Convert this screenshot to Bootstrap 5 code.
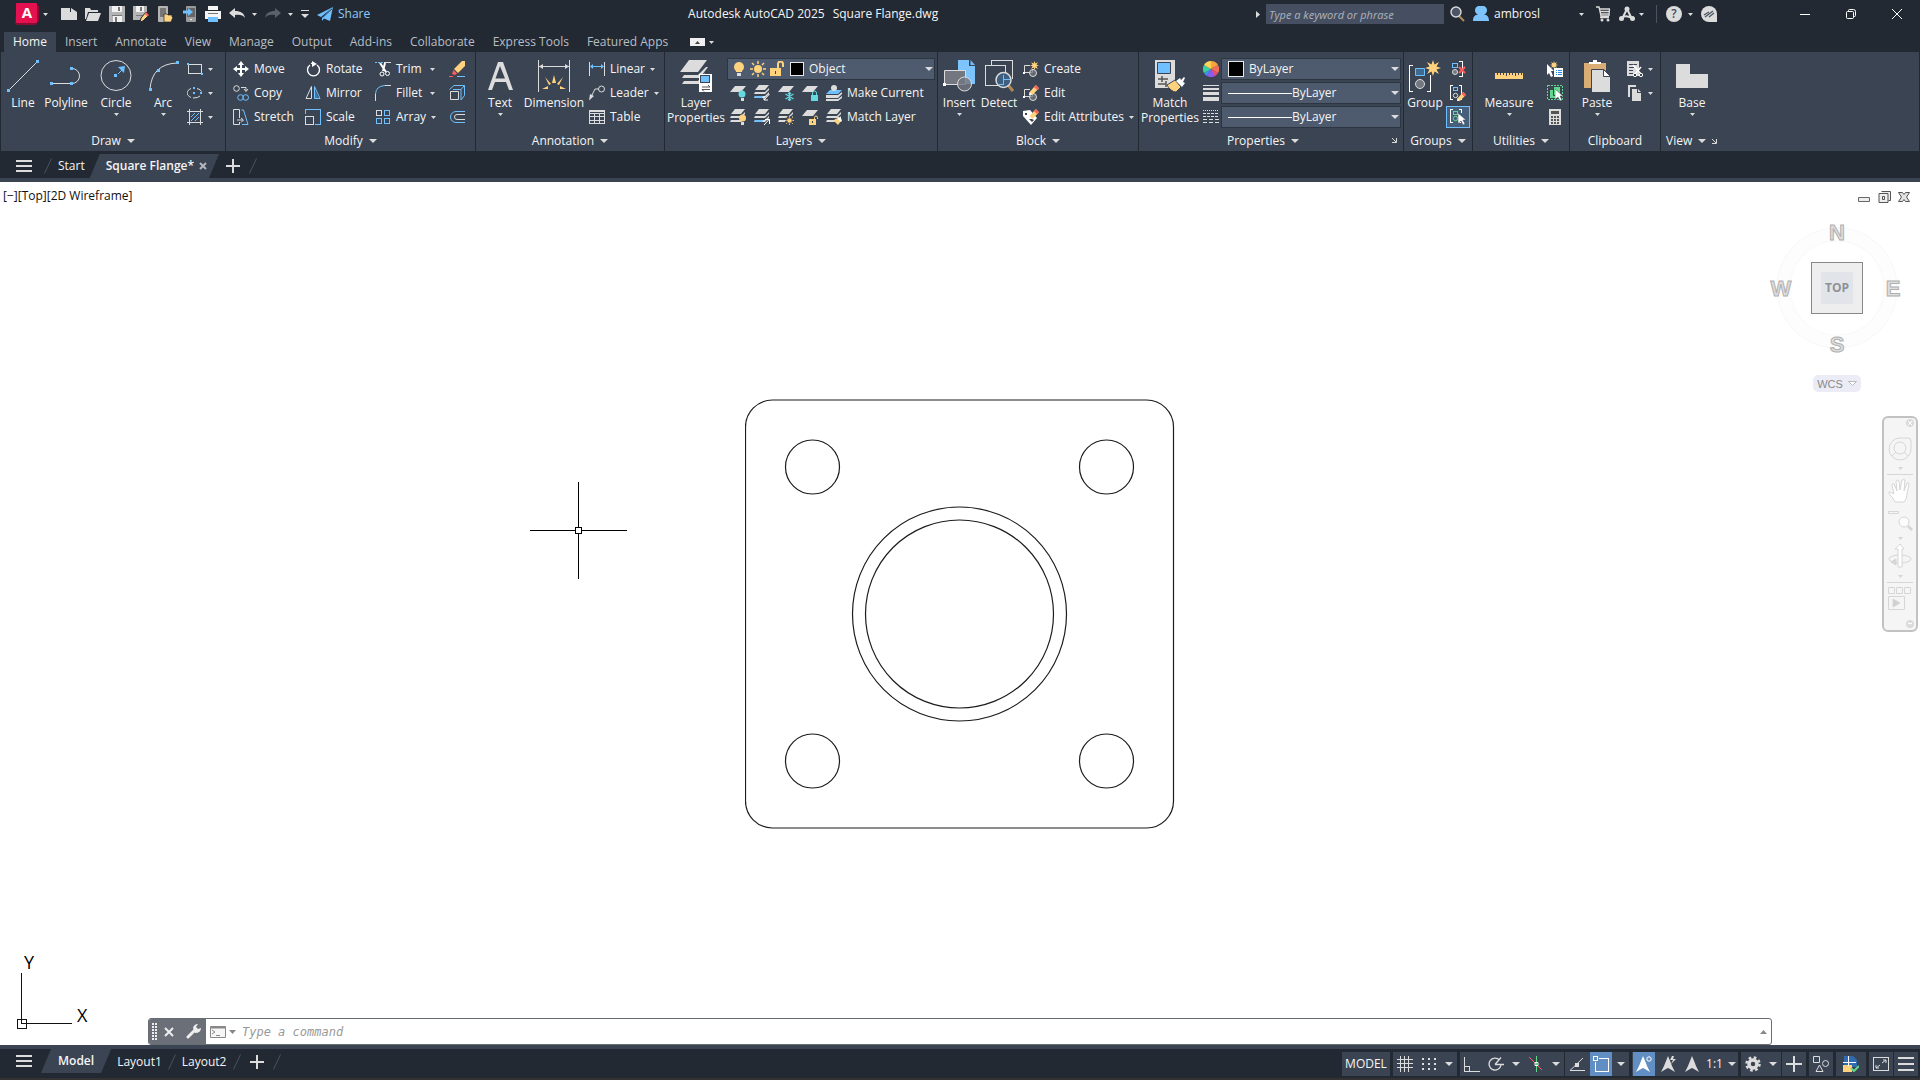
<!DOCTYPE html>
<html lang="en" data-bs-theme="dark">
<head>
<meta charset="utf-8">
<meta name="viewport" content="width=device-width, initial-scale=1">
<title>Autodesk AutoCAD 2025 - Square Flange.dwg</title>
<link href="https://cdn.jsdelivr.net/npm/bootstrap@5.3.0/dist/css/bootstrap.min.css" rel="stylesheet">
<style>
:root{--bar:#222933;--panel:#3b4453;--field:#4e5a6e;--ink:#f5f5f5;--grey:#dcdcdc;--blue:#6fc0ff;--gold:#ffd27d;--teal:#66d9e0;--green:#63d68d;--red:#ff5c5c;--on:#618fc4}
body{font-family:"Open Sans","Noto Sans",sans-serif;font-size:12px;line-height:16px;color:var(--ink);background:var(--bar);overflow:hidden}
svg{display:block;flex:none}
.i16{width:16px;height:16px}.i32{width:32px;height:32px}
.c5{width:5px;height:3px;fill:var(--grey)}.c8{width:8px;height:4px;fill:var(--grey)}
.btn{--bs-btn-padding-x:0;--bs-btn-padding-y:0;--bs-btn-border-width:0;--bs-btn-border-radius:0;--bs-btn-font-size:12px;--bs-btn-line-height:16px;--bs-btn-color:var(--ink);--bs-btn-hover-color:#fff;--bs-btn-active-color:#fff;white-space:nowrap;display:flex;align-items:center;cursor:default}
.l2{margin-left:2px}.l3{margin-left:3px}.l5{margin-left:5px}.l6{margin-left:6px}.l7{margin-left:7px}.l9{margin-left:9px}.l12{margin-left:12px}.l13{margin-left:13px}
.g5{gap:5px}.g6{gap:6px}.g7{gap:7px}
/* icon paints */
.kw{fill:none;stroke:var(--grey)}.kb{fill:none;stroke:var(--blue)}.kg{fill:none;stroke:var(--green)}.kr{fill:none;stroke:var(--red)}.kx{fill:none;stroke:#fff}.kd{fill:none;stroke:var(--panel)}
.fw{fill:var(--grey)}.fx{fill:#fff}.fb{fill:var(--blue)}.fy{fill:var(--gold)}.ft{fill:var(--teal)}.fr{fill:var(--red)}.fg{fill:var(--green)}.fd{fill:var(--panel)}.fm{fill:#73777f}
.crisp{shape-rendering:crispEdges}

.titlebar{height:32px;padding-left:15px;padding-bottom:4px}
.share{color:#8fcbf7}
.search{width:178px;height:20px;background:#454f61;border:0;border-radius:0;color:var(--ink);font-size:11px;font-style:italic;padding:0 3px}
.search::placeholder{color:#aeb4bd}
.user{width:85px}
.sep{width:1px;height:18px;background:#4a5463}
.chrome{margin-left:65px}.chrome .btn{width:46px;height:28px;justify-content:center}
.tabs{height:20px;padding-left:4px}
.tabs a{color:#b9bec5;text-decoration:none;padding:0 9px;line-height:20px}
.tabs a.active{background:var(--panel);color:var(--ink)}
.mini{width:15px;height:8px;background:#f0f0f0;margin-left:13px}

.ribbon{background:var(--panel);margin:0 1px;height:99px}
.pane{border-right:1px solid var(--bar);padding-top:5px;flex:none}
.pane:last-child{border:0}
.tools{height:72px}
.foot{height:22px;padding-top:2px;gap:6px;position:relative}
.launch{position:absolute;right:6px;top:9px}
.p-draw{width:225px}.p-modify{width:250px}.p-anno{width:189px}.p-layer{width:273px}.p-block{width:201px}.p-props{width:265px}.p-group{width:69px}.p-util{width:97px}.p-clip{width:91px}
.big{flex-direction:column;height:72px;padding-top:3px;justify-content:flex-start;line-height:15px}
.big .cap{margin:3px 0;text-align:center}
.tool{height:24px;gap:5px}
.stack{display:flex;flex-direction:column}
.w34{width:34px}.w38{width:38px}.w42{width:42px}.w48{width:48px}.w52{width:52px}.w54{width:54px}.w60{width:60px}.w62{width:62px}.w70{width:70px}.w72{width:72px}
.modes{width:60px;margin-right:14px}
.drop{height:22px;margin:1px 0;background:var(--field);border:1px solid #2d3541;padding:0 1px 0 6px}
.drop select{appearance:none;background:transparent;border:0;color:var(--ink);padding:0 5px;font-size:12px;line-height:16px;flex:1;min-width:0;outline:0}
.drop option{color:#fff;background:var(--field)}
.drop.lay{width:208px;padding-left:3px}.drop.prop{width:180px;margin-left:2px}
.swatch{width:14px;height:14px;background:#000;border:1px solid #e8e8e8}
.swatch.wide{width:16px;height:16px}
.rule{width:64px;height:1px;background:#fff}
.lit{background:#46607c;border:1px solid var(--blue);width:24px;height:22px;margin:1px 0;justify-content:center}

.docs{height:27px;padding:3px 0 0 16px}
.docs .slant{height:24px}
.slant{background:var(--panel);clip-path:polygon(10px 0,100% 0,calc(100% - 10px) 100%,0 100%)}
.slant.file{padding:0 12px 0 16px;margin-left:5px;font-weight:600}
.edge{height:4px;background:var(--panel)}

.sheet{background:#fff;color:#111;position:relative;min-height:0}
.vp{position:absolute;left:3px;top:6px}
.vpc{position:absolute;right:10px;top:9px;gap:7px}
.cross{position:absolute;left:530px;top:300px}
.ucs{position:absolute;left:16px;bottom:8px}
.cube{position:absolute;right:16px;top:30px}
.wcs{position:absolute;right:59px;top:193px;background:#ececf6;color:#888;border-radius:5px;height:17px;width:48px;gap:5px;justify-content:center;font:11px/16px "Liberation Sans",sans-serif}
.navbarv{position:absolute;right:2px;top:234px}
.cmd{position:absolute;left:148px;right:148px;bottom:0;height:27px;border:1px solid #686c75;border-radius:3px;background:#fff;overflow:hidden}
.cmd .grip{background:#6b6f78;width:57px;height:100%;padding-left:3px}
.cmd input{border:0;background:none;flex:1;font:italic 12px/16px "DejaVu Sans Mono",monospace;color:#222;padding:0 0 0 6px;outline:0}
.cmd input::placeholder{color:#999;opacity:1}

.status{height:29px;padding-left:16px}
.status .hamb{margin-top:6px}
.status .slant{height:24px;padding:0 17px;margin-left:9px;font-weight:600}
.status .toggles{padding-right:2px}
.grp{background:var(--panel);height:24px;margin-left:3px}
.grp.near{margin-left:1px}
.grp .btn{height:24px;width:24px;justify-content:center}
.grp .btn.car{width:16px}
.grp .btn.w48{width:48px}.grp .btn.w34{width:34px}
.grp .btn.on{background:var(--on);width:22px;margin:0 1px}
.grp.doc{padding:0 3px}
.foot2{height:2px;background:#333}
</style>
</head>
<body class="vh-100 d-flex flex-column">

<svg width="0" height="0" class="position-absolute" aria-hidden="true">
<symbol id="dn5" viewBox="0 0 5 3"><path d="M0 0h5L2.500 3z"/></symbol>
<symbol id="dn8" viewBox="0 0 8 4"><path d="M0 0h8L4 4z"/></symbol>
<symbol id="lau" viewBox="0 0 5 5"><path d="M0 0l4 4M4.500 0v4.500H0" fill="none" stroke="#dcdcdc"/></symbol>
<symbol id="menu" viewBox="0 0 16 12"><path class="fw crisp" d="M0 0h16v2H0zM0 5h16v2H0zM0 10h16v2H0z"/></symbol>
<symbol id="plus" viewBox="0 0 14 14"><path class="fw crisp" d="M6 0h2v6h6v2H8v6H6V8H0V6h6z"/></symbol>
<symbol id="slash" viewBox="0 0 8 16"><path d="M.5 15.500L7.500.5" stroke="#4a5260" fill="none"/></symbol>
<!-- quick access -->
<symbol id="new" viewBox="0 0 16 16"><path class="fw" d="M0 2h9v4h7v8H0z"/><path class="fw" d="M10 2l6 4h-6z"/></symbol>
<symbol id="open" viewBox="0 0 16 16"><path class="fw" d="M0 2h5l1 2h7v2H3L1 13H0z"/><path class="fw" d="M4 7h12l-3 8H1z"/></symbol>
<symbol id="save" viewBox="0 0 16 16"><path d="M0 0h16v16H0z" fill="#b4b4b4"/><path d="M3 0h10v6H3zM4 10h9v6H4z" fill="#f2f2f2"/><path d="M9 1h2v4H9zM3 9h10v1H3zM6 11h2v5H6z" fill="#777"/></symbol>
<symbol id="saveas" viewBox="0 0 16 16"><path d="M0 0h14v9L9 14H0z" fill="#b4b4b4"/><path d="M3 0h8v6H3z" fill="#f2f2f2"/><path d="M7 1h2v4H7zM3 9h8v1H3z" fill="#777"/><path class="fy" d="M13 6l3 3-6 6-3 1 1-4z" stroke="#222933"/><path class="fr" d="M13 6l3 3-1.500 1.500-3-3z"/></symbol>
<symbol id="phone1" viewBox="0 0 16 16"><rect x="1" width="10" height="16" rx="1" fill="#b4b4b4"/><path d="M3 2h6v9H3z" fill="#777"/><path class="fy" d="M7 8h3l1 1h4v2h1l-2 5H7z" stroke="#222933" stroke-width=".7"/></symbol>
<symbol id="phone2" viewBox="0 0 16 16"><rect x="5" width="10" height="16" rx="1" fill="#9a9a9a"/><path d="M6 2h8v9H6z" fill="#666"/><path d="M9 13h2v1H9z" fill="#eee"/><path class="fb" d="M2 4.500h5V2l5 4-5 4V7.500H2z"/></symbol>
<symbol id="print" viewBox="0 0 16 16"><path d="M3 0h10v4H3z" fill="#f5f5f5"/><path d="M0 5h16v8h-3v-2H3v2H0z" fill="#f5f5f5"/><path d="M3 7h10v1H3z" fill="#777"/><path class="fb" d="M3 11h10v5H3z"/></symbol>
<symbol id="undo" viewBox="0 0 16 16"><path d="M0 7l6-5v3c6 0 9 2 10 7-2-3-5-3.500-10-3v3z"/></symbol>
<symbol id="redo" viewBox="0 0 16 16"><path d="M16 7l-6-5v3C4 5 1 7 0 12c2-3 5-3.500 10-3v3z"/></symbol>
<symbol id="share" viewBox="0 0 16 16"><path class="fb" d="M16 1L0 9l4 2zM16 1L5 11.500V15l2-2.500 6 2.500z"/><path d="M15 3L5.500 11.500" stroke="#222933" stroke-width=".8"/></symbol>
<symbol id="find" viewBox="0 0 16 16"><path d="M9 10l5 5" stroke="#b08a55" stroke-width="2"/><circle cx="6" cy="6" r="5" fill="#4b5565" stroke="#dcdcdc" stroke-width="1.400"/></symbol>
<symbol id="user" viewBox="0 0 16 16"><path d="M8 0a4.500 4.500 0 0 1 3 8.500c3 .5 5 2 5 6.500H0c0-4.500 2-6 5-6.500A4.500 4.500 0 0 1 8 0z" fill="#7cc4fb"/></symbol>
<symbol id="cart" viewBox="0 0 16 16"><path class="kw" stroke-width="1.300" d="M0 1h3l2 9h8M4 11.500h9M4 3h10M4.500 5.500h9M5 8h8M13.500 3L13 10"/><circle class="fw" cx="6" cy="14" r="1.500"/><circle class="fw" cx="12" cy="14" r="1.500"/></symbol>
<symbol id="alogo" viewBox="0 0 16 16"><path class="kw" stroke-width="2" d="M8 3l5 10M8 3L3 13M3 12c3-3 6-2 10 0"/><circle class="fw" cx="8" cy="3" r="2.500"/><circle class="fw" cx="2.500" cy="12.500" r="2.500"/><circle class="fw" cx="13.500" cy="12.500" r="2.500"/></symbol>
<symbol id="chat" viewBox="0 0 16 16"><path class="fw" d="M8 0a8 8 0 0 1 8 8v8H8A8 8 0 0 1 8 0z"/><path d="M3 9l5-3M4 11l8-6M8 11l5-4" stroke="#4b5565" stroke-width="1.300"/></symbol>
<!-- draw -->
<symbol id="line" viewBox="0 0 32 32"><path class="kw" d="M2 30L30 2"/><path class="fb" d="M0 29h3v3H0zM29 0h3v3h-3z"/></symbol>
<symbol id="pline" viewBox="0 0 32 32"><path class="kw" d="M2 23.500h20a7.500 7.500 0 0 0 0-15"/><path class="fb" d="M0 22h3v3H0zM20 22h3v3h-3zM20 7h3v3h-3z"/></symbol>
<symbol id="circle" viewBox="0 0 32 32"><circle class="kw" cx="16" cy="15.500" r="15"/><path class="kb" d="M18 14l5-5"/><path class="fb" d="M14 14h3v3h-3zM25 6l-1 7-6-6z"/></symbol>
<symbol id="arc" viewBox="0 0 32 32"><path class="kw" d="M3 29Q5 4 30 3"/><path class="fb" d="M2 28h3v3H2zM10 9h3v3h-3zM29 1h3v3h-3z"/></symbol>
<symbol id="rect" viewBox="0 0 16 16"><path class="kw crisp" d="M1.500 3.500h13v9h-13z"/><path class="fb" d="M0 2h2v2H0zM14 12h2v2h-2z"/></symbol>
<symbol id="ell" viewBox="0 0 16 16"><path class="kw" d="M4 3.500C-1.500 6-1 10 4 12.500M10 3.500q4 1 4.500 3M13 11q-2 2-7 2"/><path class="fb" d="M6 2h2v2H6zM13 7h2v2h-2zM6 7h2v2H6z"/></symbol>
<symbol id="hatch" viewBox="0 0 16 16"><path class="kw crisp" d="M2.500 0v16M13.500 0v16M0 2.500h16M0 13.500h16"/><path class="kb" d="M4 8l4-4M4 12l8-8M8 12l4-4"/></symbol>
<!-- modify -->
<symbol id="move" viewBox="0 0 16 16"><path class="fx" d="M8 0l3 4H9v3h3V5l4 3-4 3V9H9v3h2l-3 4-3-4h2V9H4v2L0 8l4-3v2h3V4H5z"/></symbol>
<symbol id="copy" viewBox="0 0 16 16"><circle class="kw" cx="3.500" cy="3.500" r="2.800"/><path class="kw" d="M8 2.500h5V6M11 4l2 2.500L15 4"/><circle class="kb" cx="7.500" cy="12.500" r="2.800"/><circle class="kb" cx="12.700" cy="12.500" r="2.800"/></symbol>
<symbol id="stretch" viewBox="0 0 16 16"><path class="kw" d="M6.500 9V.5h-6v15h6V13M4 11h6M8 9l2.500 2L8 13.500"/><path class="kb" d="M8.500 1h2l4.500 14.500H9"/></symbol>
<symbol id="rot" viewBox="0 0 16 16"><path class="kx" stroke-width="1.300" d="M5 4a6 6 0 1 0 7 0M9 3.500q-2-1.500-3-1"/><path class="fx" d="M7 0l5 3-5 3z"/></symbol>
<symbol id="mir" viewBox="0 0 16 16"><path d="M6.500 1.500L1 13.500h5.500z" class="kw"/><path d="M9 3v11h5z" fill="#3f77a8"/><path d="M9.500 1.500v12H15z" class="kb"/></symbol>
<symbol id="scale" viewBox="0 0 16 16"><path class="kb crisp" d="M.5 5V.5h15v15H10"/><path class="kw crisp" d="M.5 7.500h8v8h-8z"/></symbol>
<symbol id="trim" viewBox="0 0 16 16"><path class="kb crisp" stroke-dasharray="2 1" d="M0 1.500h9"/><path class="kw crisp" d="M9 1.500h7"/><path d="M5 2l6 9M10 2L8 10" stroke="#fff" stroke-width="2"/><circle class="kx" cx="7" cy="13" r="2"/><circle class="kx" cx="12.500" cy="12.500" r="2"/></symbol>
<symbol id="fillet" viewBox="0 0 16 16"><path class="kw crisp" d="M.5 16V9M10 .5h6"/><path class="kb" d="M.5 9Q1 1 10 .5"/></symbol>
<symbol id="array" viewBox="0 0 16 16"><path class="kw crisp" d="M1.500 1.500h5v5h-5z"/><path class="kb crisp" d="M9.500 1.500h5v5h-5zM1.500 9.500h5v5h-5zM9.500 9.500h5v5h-5z"/></symbol>
<symbol id="erase" viewBox="0 0 16 16"><path class="fy" d="M13 0h3v5l-7 7-4-4z"/><path class="fr" d="M4.500 9l3.500 3.500L6 14 3 13z"/><path class="kb crisp" d="M8 15.500h8"/><path class="kr crisp" d="M0 15.500h4"/></symbol>
<symbol id="explode" viewBox="0 0 16 16"><path class="kb" d="M.5 4.500L5 .5h10.500v10L12 15M4 4.500h8V15M12 4.500L15.500.5"/><path class="kw" d="M1.500 6.500h8v8h-8z"/></symbol>
<symbol id="offset" viewBox="0 0 16 16"><path class="kb" d="M16 2.500H7a5.500 5.500 0 0 0 0 11h9"/><path class="kw" d="M16 5.500H8a2.500 2.500 0 0 0 0 5h8"/></symbol>
<!-- annotation -->
<symbol id="text" viewBox="0 0 32 32"><path class="fw" fill-rule="evenodd" d="M14 2h5l10 28h-4l-3-8H11l-3 8H4zM16 6l-4.500 12.500h9.500z"/></symbol>
<symbol id="dim" viewBox="0 0 32 32"><path class="kw crisp" d="M.5 0v32M31.500 0v32M1 6.500h30"/><path class="fw" d="M1 6.500L5 4v5zM31 6.500L27 4v5z"/><path class="fy" d="M16 15l2 8h-4zM7 17l6 7-2 1zM25 17l-6 7 2 1zM4 29l6-3v3zM28 29l-6-3v3z"/></symbol>
<symbol id="lin" viewBox="0 0 16 16"><path class="kw crisp" d="M.5 1v14M15.500 1v14"/><path class="kb crisp" d="M2 5.500h12"/><path class="fb" d="M1 5.500L4 3v5zM15 5.500L12 3v5z"/></symbol>
<symbol id="lead" viewBox="0 0 16 16"><circle class="kw" cx="12.500" cy="4" r="3"/><path class="kw" d="M9.500 4H6L2 12"/><path class="fw" d="M0 15.500L1 9l4 2z"/></symbol>
<symbol id="table" viewBox="0 0 16 16"><path class="kw crisp" d="M.5 1.500h15v13H.5zM0 4.500h16M0 7.500h16M0 11.500h16M5.500 5v10M10.500 5v10M0 2.500h16"/></symbol>
<!-- layers -->
<symbol id="layprop" viewBox="0 0 32 32"><path class="fw" d="M9 0h18l-9 12H0zM26 7h2l-3 4-5 7H2l2-3h14zM25 13v5l-5 6H2l2-3h14z"/><path class="fx" d="M19 14h13v18H19z"/><path class="fb crisp" d="M20.500 15.500h9v7h-9z" stroke="#3b4453"/><path d="M22 27h8l-2-2M30 29.500h-8l2 2" stroke="#555" fill="none"/></symbol>
<symbol id="bulb" viewBox="0 0 16 16"><circle class="fy" cx="8" cy="6" r="5"/><path class="fy" d="M5 9h6v2H5z"/><path class="fw" d="M6 12h4v3H6z"/></symbol>
<symbol id="sun" viewBox="0 0 16 16"><circle class="fy" cx="8" cy="8" r="4"/><path d="M8 0v3M8 13v3M0 8h3M13 8h3M2 2l2 2M12 12l2 2M14 2l-2 2M2 14l2-2" stroke="#ffd27d" stroke-width="1.500"/></symbol>
<symbol id="unlock" viewBox="0 0 16 16"><path class="fy" d="M1 7h11v8H1z"/><path d="M9 7V3a2.500 2.500 0 0 1 5 0v3" fill="none" stroke="#ffd27d" stroke-width="2"/><path class="fd" d="M6 10h1v3H6z"/></symbol>
<symbol id="ly1" viewBox="0 0 16 16"><path class="fw" d="M5 1h11l-5 6H0z"/></symbol>
<symbol id="ly3" viewBox="0 0 16 16"><path class="fw" d="M5 0h10l-4 5H1zM1 7h10l4-4v2l-4 4H0zM1 11h10l4-4v2l-4 4H0z"/></symbol>
<symbol id="l-off" viewBox="0 0 16 16"><use href="#ly1"/><circle class="ft" cx="12" cy="9" r="3.500"/><path class="fw" d="M11 13h3v3h-3z"/></symbol>
<symbol id="l-iso" viewBox="0 0 16 16"><use href="#ly3"/><path class="fb" d="M1 11h8l-1 2H0z"/><path class="kx" d="M15.500 9L10 15M10 11.500V15h4"/></symbol>
<symbol id="l-frz" viewBox="0 0 16 16"><use href="#ly1"/><path d="M11.500 7v9M7.500 9l8 5M15.500 9l-8 5M10 8l1.500 1.500L13 8M10 15l1.500-1.500L13 15" fill="none" stroke="#66d9e0" stroke-width="1.200"/></symbol>
<symbol id="l-lock" viewBox="0 0 16 16"><use href="#ly1"/><path class="ft" d="M9 10h7v6H9z"/><path d="M10.500 10V8a2 2 0 0 1 4 0v2" fill="none" stroke="#66d9e0"/></symbol>
<symbol id="l-cur" viewBox="0 0 16 16"><path class="fb" d="M4 5h12l-4 4H0z"/><path class="fw" d="M0 10h12l4-3v2l-4 4H0zM0 14h12l4-3v2l-4 3H0z"/><circle class="fw" cx="8" cy="3" r="3"/></symbol>
<symbol id="l-on" viewBox="0 0 16 16"><use href="#ly3"/><circle class="fy" cx="12.500" cy="9" r="3.500"/><path class="fw" d="M11 13h3v3h-3z"/></symbol>
<symbol id="l-uniso" viewBox="0 0 16 16"><use href="#ly3"/><path class="fb" d="M1 11h8l-1 2H0z"/><path class="kx" d="M10 16l5.500-6M11 10.500h4.500V15"/></symbol>
<symbol id="l-thaw" viewBox="0 0 16 16"><use href="#ly3"/><circle class="fd" cx="11.500" cy="11.500" r="4.500"/><use href="#sun" x="7" y="7" width="9" height="9"/></symbol>
<symbol id="l-unl" viewBox="0 0 16 16"><use href="#ly1"/><path class="fy" d="M7 10h7v6H7z"/><path d="M12.500 10V8.500a1.500 1.500 0 0 1 3 0V10" fill="none" stroke="#ffd27d"/><path class="fd" d="M10 12h1v2h-1z"/></symbol>
<symbol id="l-mat" viewBox="0 0 16 16"><use href="#ly3"/><path class="fy" d="M9 10l4-1 2 3-3 4-4-4z"/><path class="fx" d="M12 8l3 1 1 3-1.500 1L11 9z"/></symbol>
<!-- block -->
<symbol id="insert" viewBox="0 0 32 32"><path d="M15 0h11l6 6v18H15z" fill="#7cc4fb"/><path class="fd" d="M26 0v6h6V0z"/><path class="fb" d="M27.500 0v5H32z"/><path class="fm" stroke="#dcdcdc" d="M1.500 10.500h21v14h-21z"/><path class="fx" d="M0 23h3v3H0z"/><circle class="fm" fill-opacity=".8" stroke="#dcdcdc" cx="21.500" cy="24" r="7"/></symbol>
<symbol id="detect" viewBox="0 0 32 32"><path class="kw crisp" d="M8.500 5V.5h21V19M2.500 5.500h20v20h-20z"/><path d="M25 25l5 6" stroke="#b08a55" stroke-width="3"/><circle cx="20.500" cy="20" r="7.500" fill="#3d5f80" stroke="#dcdcdc" stroke-width="1.500"/><path class="kb crisp" d="M20.500 15v9M16 24.500h5M21 19.500h6"/></symbol>
<symbol id="blk" viewBox="0 0 16 16"><path class="kw" d="M7 4.500H1.500v7h8V8"/><path class="fx" d="M0 11h2v2H0z"/><circle class="fm" fill-opacity=".7" stroke="#dcdcdc" cx="10" cy="12" r="3.500"/></symbol>
<symbol id="star" viewBox="0 0 16 16"><path class="fy" d="M8 0l1.500 4.500L14 2l-2.500 4.500L16 8l-4.500 1.500L14 14l-4.500-2.500L8 16l-1.500-4.500L2 14l2.500-4.500L0 8l4.500-1.500L2 2l4.500 2.500z"/></symbol>
<symbol id="pen" viewBox="0 0 16 16"><path class="fy" d="M11 0l5 5L6 15l-5 1 0-5z"/><path class="fr" d="M11 0l5 5-3 3-5-5z"/><path class="fx" d="M1 11l4 4-5 1z"/></symbol>
<symbol id="b-new" viewBox="0 0 16 16"><use href="#blk"/><use href="#star" x="7" width="9" height="9"/></symbol>
<symbol id="b-edit" viewBox="0 0 16 16"><use href="#blk"/><use href="#pen" x="6" width="10" height="10"/></symbol>
<symbol id="b-attr" viewBox="0 0 16 16"><path class="fx" d="M0 2l7-1 7 8-6 7-8-9z"/><path class="fd" d="M2 4h2v2H2zM6 10l3 3 2-2-2-1z"/><use href="#pen" x="6" width="10" height="10"/></symbol>
<!-- properties -->
<symbol id="mprop" viewBox="0 0 32 32"><path class="fw" d="M1 0h20v28H1z"/><path class="fb" stroke="#3b4453" d="M3.500 2.500h13v11h-13z"/><path d="M4 19h10M8 16v6M4 24h8M12 21v6" stroke="#555" stroke-width="1.500"/><path class="fy" d="M13 25l8-5 6 7-5 5c-3 0-7-3-9-7z" stroke="#3b4453"/><path class="fx" d="M22 21l4-3 1 2 3-3 1 1-2 4 2 1-3 4z"/></symbol>
<symbol id="lwt" viewBox="0 0 16 16"><path class="fw crisp" d="M0 0h16v1H0zM0 3h16v2H0zM0 7h16v3H0zM0 12h16v4H0z"/></symbol>
<symbol id="ltp" viewBox="0 0 16 16"><g class="kw crisp"><path stroke-dasharray="1 1" d="M0 1.500h16"/><path stroke-dasharray="3 1" d="M0 4.500h16M0 7.500h16"/><path stroke-dasharray="4 2" d="M0 10.500h16M0 13.500h16"/></g></symbol>
<!-- groups -->
<symbol id="group" viewBox="0 0 32 32"><path class="kx crisp" d="M4 5.500H.5v26H4M18 31.500h3.500V15"/><path d="M6.500 8.500h9v7h-9z" fill="#3f6a92" stroke="#6fc0ff"/><circle class="fm" stroke="#dcdcdc" cx="11" cy="24" r="4.500"/><use href="#star" x="16" y="0" width="16" height="16"/></symbol>
<symbol id="g-base" viewBox="0 0 16 16"><path class="kx crisp" d="M3 .5H.5v14H3M9 .5h2.500v14H9"/><path class="kb crisp" d="M3.500 2.500h4v3h-4z"/><circle class="kw" cx="5.500" cy="10.500" r="2.200"/></symbol>
<symbol id="g-un" viewBox="0 0 16 16"><path class="kx crisp" d="M9 .5h3.500v15H9"/><path class="kb crisp" d="M2.500 2.500h5v4h-5z"/><circle class="fm" stroke="#dcdcdc" cx="5" cy="11" r="2.500"/><path class="kr" stroke-width="2" d="M9 6l6 6M15 6l-6 6"/></symbol>
<symbol id="g-edit" viewBox="0 0 16 16"><use href="#g-base"/><use href="#pen" x="7" y="7" width="9" height="9"/></symbol>
<symbol id="cur" viewBox="0 0 8 12"><path class="fx" stroke="#3b4453" stroke-width=".5" d="M0 0l8 7H5l2 4-2 1-2-4-3 2.500z"/></symbol>
<symbol id="g-sel" viewBox="0 0 16 16"><path class="kx crisp" d="M3 .5H.5v13H3M9 .5h2.500V4M9 13.500h2"/><path class="kg crisp" d="M3.500 2.500h4v3h-4z"/><circle class="kg" cx="5.500" cy="9.500" r="2.200"/><use href="#cur" x="8" y="4" width="8" height="12"/></symbol>
<!-- utilities, clipboard, view -->
<symbol id="ruler" viewBox="0 0 32 32"><path class="fy crisp" d="M2 13h28v6H2z"/><path class="kd crisp" d="M4.500 13v2M7.500 13v2M10.500 13v2M13.500 13v3M16.500 13v2M19.500 13v2M22.500 13v3M25.500 13v2M28.500 13v2"/></symbol>
<symbol id="qsel" viewBox="0 0 16 16"><path class="fx" d="M0 3l7 7H4l2 5-2 1-2-4-2 2z"/><use href="#star" x="3" width="8" height="8"/><path class="fx" d="M7 7h9v9H7z"/><path class="crisp" stroke="#2d8ae0" d="M9 9.500h1M11 9.500h4M9 11.500h1M11 11.500h4M9 13.500h1M11 13.500h4"/></symbol>
<symbol id="selall" viewBox="0 0 16 16"><path class="kg crisp" stroke-dasharray="2 1" d="M.5.5h15v14H.5z"/><path class="fg" d="M3 5h5v5h4v3H3zM7 2h6v8H7z"/><path class="kd" d="M6.500 5v5.500H12"/><use href="#cur" x="8" y="4" width="8" height="12"/></symbol>
<symbol id="calc" viewBox="0 0 16 16"><path class="fw" d="M2 0h12v16H2z"/><path fill="#555" d="M4 2h8v3H4z"/><path class="crisp" stroke="#555" stroke-width="2" stroke-dasharray="2 1" d="M4 8h8M4 11h8M4 14h8"/></symbol>
<symbol id="paste" viewBox="0 0 32 32"><path fill="#d9ad74" d="M3 3h22v25H3z"/><path class="fx" d="M8 4V2h4V0h4v2h4v2z"/><path class="fw" stroke="#3b4453" d="M10.500 9.500H23l6.500 7V32.500h-19z"/><path class="fx" stroke="#3b4453" d="M22.500 9.500v7h7z"/></symbol>
<symbol id="cut" viewBox="0 0 16 16"><path class="fw" d="M0 0h12v15H0z"/><path class="kd" d="M2 3.500h8M2 6.500h5M2 9.500h4M2 12.500h4"/><path d="M6 4l8 9M14 6l-6 7" stroke="#fff" stroke-width="1.500"/><circle class="fd" stroke="#fff" cx="8" cy="14" r="1.700"/><circle class="fd" stroke="#fff" cx="14" cy="14" r="1.700"/></symbol>
<symbol id="copyc" viewBox="0 0 16 16"><path class="fw" d="M1 0h8v2H3v10H1z"/><path class="fw" d="M5 4h5v4h4v8H5zM11 4l3 3h-3z"/></symbol>
<symbol id="base" viewBox="0 0 32 32"><path class="fw crisp" d="M0 4h14v10h18v14H0z"/></symbol>
<!-- status -->
<symbol id="ann" viewBox="0 0 16 16"><path d="M8 0l2.500 6 1.500 4 3 6-5-3-2-1-2 1-5 3 3-6z"/></symbol>
</svg>

<header class="titlebar d-flex align-items-center">
  <button class="btn" aria-label="Application menu"><svg width="24" height="22"><path d="M2 2l-2 18 2 2h18l4-4V3z" fill="#8c0c33"/><rect x="1" width="21" height="20" rx="1" fill="#e51050"/><text x="12" y="15" text-anchor="middle" font-size="15" font-weight="700" fill="#fff">A</text></svg><svg class="c5 ms-1"><use href="#dn5"/></svg></button>
  <div class="d-flex align-items-center gap-2 l13">
    <button class="btn" aria-label="New"><svg class="i16"><use href="#new"/></svg></button>
    <button class="btn" aria-label="Open"><svg class="i16"><use href="#open"/></svg></button>
    <button class="btn" aria-label="Save"><svg class="i16"><use href="#save"/></svg></button>
    <button class="btn" aria-label="Save As"><svg class="i16"><use href="#saveas"/></svg></button>
    <button class="btn" aria-label="Open from Web and Mobile"><svg class="i16"><use href="#phone1"/></svg></button>
    <button class="btn" aria-label="Save to Web and Mobile"><svg class="i16"><use href="#phone2"/></svg></button>
    <button class="btn" aria-label="Plot"><svg class="i16"><use href="#print"/></svg></button>
    <button class="btn g7" aria-label="Undo"><svg class="i16" fill="#dcdcdc"><use href="#undo"/></svg><svg class="c5"><use href="#dn5"/></svg></button>
    <button class="btn g7" aria-label="Redo"><svg class="i16" fill="#5b6069"><use href="#redo"/></svg><svg class="c5"><use href="#dn5"/></svg></button>
    <button class="btn" aria-label="Customize Quick Access Toolbar"><svg width="8" height="8" fill="#dcdcdc"><path d="M0 0h8v1H0zM0 4h8L4 8z"/></svg></button>
    <button class="btn g5 share"><svg class="i16"><use href="#share"/></svg>Share</button>
  </div>
  <div class="flex-grow-1 d-flex justify-content-center gap-2"><span>Autodesk AutoCAD 2025</span><span>Square Flange.dwg</span></div>
  <svg width="4" height="7" fill="#dcdcdc"><path d="M0 0l4 3.500L0 7z"/></svg>
  <input class="search l6" type="search" aria-label="Search" placeholder="Type a keyword or phrase">
  <button class="btn l6" aria-label="Search"><svg class="i16"><use href="#find"/></svg></button>
  <button class="btn l7 g5"><svg class="i16"><use href="#user"/></svg><span class="user text-start">ambrosl</span></button>
  <svg class="c5"><use href="#dn5"/></svg>
  <button class="btn l12" aria-label="App Store"><svg class="i16"><use href="#cart"/></svg></button>
  <button class="btn l7" aria-label="Autodesk apps"><svg class="i16"><use href="#alogo"/></svg><svg class="c5 ms-1"><use href="#dn5"/></svg></button>
  <span class="sep l12"></span>
  <button class="btn l9 g6" aria-label="Help"><svg class="i16"><circle class="fw" cx="8" cy="8" r="8"/><text x="8" y="12" text-anchor="middle" font-size="12" font-weight="600" fill="#444c58">?</text></svg><svg class="c5"><use href="#dn5"/></svg></button>
  <button class="btn ms-2" aria-label="Assistant"><svg class="i16"><use href="#chat"/></svg></button>
  <div class="chrome d-flex">
    <button class="btn" aria-label="Minimize"><svg width="10" height="10"><path class="kx crisp" d="M0 5.500h10"/></svg></button>
    <button class="btn" aria-label="Restore"><svg width="10" height="10"><path class="kx" d="M2.500 2V1.500q0-1 1-1h4q2 0 2 2v4q0 1-1 1H8"/><rect class="kx" x=".5" y="2.500" width="7" height="7" rx="1"/></svg></button>
    <button class="btn" aria-label="Close"><svg width="10" height="10"><path class="kx" d="M0 0l10 10M10 0L0 10"/></svg></button>
  </div>
</header>

<nav class="tabs d-flex align-items-center">
  <a class="active" href="#">Home</a><a href="#">Insert</a><a href="#">Annotate</a><a href="#">View</a><a href="#">Manage</a><a href="#">Output</a><a href="#">Add-ins</a><a href="#">Collaborate</a><a href="#">Express Tools</a><a href="#">Featured Apps</a>
  <button class="btn mini justify-content-center" aria-label="Minimize ribbon"><svg width="5" height="3" fill="#444"><path d="M0 3h5L2.500 0z"/></svg></button><svg class="c5 ms-1"><use href="#dn5"/></svg>
</nav>

<section class="ribbon d-flex" aria-label="Home ribbon">
  <div class="pane p-draw">
    <div class="tools d-flex">
      <button class="btn big w38 l3"><svg class="i32"><use href="#line"/></svg><span class="cap">Line</span></button>
      <button class="btn big w48"><svg class="i32"><use href="#pline"/></svg><span class="cap">Polyline</span></button>
      <button class="btn big w52"><svg class="i32"><use href="#circle"/></svg><span class="cap">Circle</span><svg class="c5"><use href="#dn5"/></svg></button>
      <button class="btn big w42"><svg class="i32"><use href="#arc"/></svg><span class="cap">Arc</span><svg class="c5"><use href="#dn5"/></svg></button>
      <div class="stack l3">
        <button class="btn tool" aria-label="Rectangle"><svg class="i16"><use href="#rect"/></svg><svg class="c5"><use href="#dn5"/></svg></button>
        <button class="btn tool" aria-label="Ellipse"><svg class="i16"><use href="#ell"/></svg><svg class="c5"><use href="#dn5"/></svg></button>
        <button class="btn tool" aria-label="Hatch"><svg class="i16"><use href="#hatch"/></svg><svg class="c5"><use href="#dn5"/></svg></button>
      </div>
    </div>
    <div class="foot d-flex align-items-center justify-content-center">Draw<svg class="c8"><use href="#dn8"/></svg></div>
  </div>

  <div class="pane p-modify">
    <div class="tools d-flex l7">
      <div class="stack w72">
        <button class="btn tool"><svg class="i16"><use href="#move"/></svg>Move</button>
        <button class="btn tool"><svg class="i16"><use href="#copy"/></svg>Copy</button>
        <button class="btn tool"><svg class="i16"><use href="#stretch"/></svg>Stretch</button>
      </div>
      <div class="stack w70">
        <button class="btn tool"><svg class="i16"><use href="#rot"/></svg>Rotate</button>
        <button class="btn tool"><svg class="i16"><use href="#mir"/></svg>Mirror</button>
        <button class="btn tool"><svg class="i16"><use href="#scale"/></svg>Scale</button>
      </div>
      <div class="stack modes">
        <button class="btn tool"><svg class="i16"><use href="#trim"/></svg>Trim<svg class="c5 ms-auto"><use href="#dn5"/></svg></button>
        <button class="btn tool"><svg class="i16"><use href="#fillet"/></svg>Fillet<svg class="c5 ms-auto"><use href="#dn5"/></svg></button>
        <button class="btn tool"><svg class="i16"><use href="#array"/></svg>Array<svg class="c5 ms-auto"><use href="#dn5"/></svg></button>
      </div>
      <div class="stack">
        <button class="btn tool" aria-label="Erase"><svg class="i16"><use href="#erase"/></svg></button>
        <button class="btn tool" aria-label="Explode"><svg class="i16"><use href="#explode"/></svg></button>
        <button class="btn tool" aria-label="Offset"><svg class="i16"><use href="#offset"/></svg></button>
      </div>
    </div>
    <div class="foot d-flex align-items-center justify-content-center">Modify<svg class="c8"><use href="#dn8"/></svg></div>
  </div>

  <div class="pane p-anno">
    <div class="tools d-flex">
      <button class="btn big w48"><svg class="i32"><use href="#text"/></svg><span class="cap">Text</span><svg class="c5"><use href="#dn5"/></svg></button>
      <button class="btn big w60"><svg class="i32"><use href="#dim"/></svg><span class="cap">Dimension</span></button>
      <div class="stack l5">
        <button class="btn tool"><svg class="i16"><use href="#lin"/></svg>Linear<svg class="c5"><use href="#dn5"/></svg></button>
        <button class="btn tool"><svg class="i16"><use href="#lead"/></svg>Leader<svg class="c5"><use href="#dn5"/></svg></button>
        <button class="btn tool"><svg class="i16"><use href="#table"/></svg>Table</button>
      </div>
    </div>
    <div class="foot d-flex align-items-center justify-content-center">Annotation<svg class="c8"><use href="#dn8"/></svg></div>
  </div>

  <div class="pane p-layer">
    <div class="tools d-flex">
      <button class="btn big w62"><svg class="i32"><use href="#layprop"/></svg><span class="cap">Layer<br>Properties</span></button>
      <div class="stack">
        <div class="drop lay d-flex align-items-center"><svg class="i16"><use href="#bulb"/></svg><svg class="i16 l3"><use href="#sun"/></svg><svg class="i16 l3"><use href="#unlock"/></svg><span class="swatch l5"></span><select aria-label="Layer"><option>Object</option></select><svg class="c8"><use href="#dn8"/></svg></div>
        <div class="d-flex gap-2 l3">
          <button class="btn tool" aria-label="Layer off"><svg class="i16"><use href="#l-off"/></svg></button>
          <button class="btn tool" aria-label="Isolate"><svg class="i16"><use href="#l-iso"/></svg></button>
          <button class="btn tool" aria-label="Freeze"><svg class="i16"><use href="#l-frz"/></svg></button>
          <button class="btn tool" aria-label="Lock"><svg class="i16"><use href="#l-lock"/></svg></button>
          <button class="btn tool"><svg class="i16"><use href="#l-cur"/></svg>Make Current</button>
        </div>
        <div class="d-flex gap-2 l3">
          <button class="btn tool" aria-label="All layers on"><svg class="i16"><use href="#l-on"/></svg></button>
          <button class="btn tool" aria-label="Unisolate"><svg class="i16"><use href="#l-uniso"/></svg></button>
          <button class="btn tool" aria-label="Thaw"><svg class="i16"><use href="#l-thaw"/></svg></button>
          <button class="btn tool" aria-label="Unlock"><svg class="i16"><use href="#l-unl"/></svg></button>
          <button class="btn tool"><svg class="i16"><use href="#l-mat"/></svg>Match Layer</button>
        </div>
      </div>
    </div>
    <div class="foot d-flex align-items-center justify-content-center">Layers<svg class="c8"><use href="#dn8"/></svg></div>
  </div>

  <div class="pane p-block">
    <div class="tools d-flex">
      <button class="btn big w42"><svg class="i32"><use href="#insert"/></svg><span class="cap">Insert</span><svg class="c5"><use href="#dn5"/></svg></button>
      <button class="btn big w38"><svg class="i32"><use href="#detect"/></svg><span class="cap">Detect</span></button>
      <div class="stack l5">
        <button class="btn tool"><svg class="i16"><use href="#b-new"/></svg>Create</button>
        <button class="btn tool"><svg class="i16"><use href="#b-edit"/></svg>Edit</button>
        <button class="btn tool"><svg class="i16"><use href="#b-attr"/></svg>Edit Attributes<svg class="c5"><use href="#dn5"/></svg></button>
      </div>
    </div>
    <div class="foot d-flex align-items-center justify-content-center">Block<svg class="c8"><use href="#dn8"/></svg></div>
  </div>

  <div class="pane p-props">
    <div class="tools d-flex">
      <button class="btn big w62"><svg class="i32"><use href="#mprop"/></svg><span class="cap">Match<br>Properties</span></button>
      <div class="stack l2">
        <span class="tool d-flex align-items-center"><svg class="i16" viewBox="0 0 16 16"><path fill="#f9a33c" d="M8 8V0a8 8 0 0 1 7 4z"/><path fill="#f2705b" d="M8 8l7-4a8 8 0 0 1 0 8z"/><path fill="#ee4e6a" d="M8 8l7 4a8 8 0 0 1-4 3.500z"/><path fill="#8b5cf0" d="M8 8l4 7a8 8 0 0 1-8 0z"/><path fill="#3f8ff0" d="M8 8l-4 7a8 8 0 0 1-3-3z"/><path fill="#3ccfa0" d="M8 8l-7 4a8 8 0 0 1 0-8z"/><path fill="#ffd257" d="M8 8L1 4a8 8 0 0 1 7-4z"/></svg></span>
        <span class="tool d-flex align-items-center"><svg class="i16"><use href="#lwt"/></svg></span>
        <span class="tool d-flex align-items-center"><svg class="i16"><use href="#ltp"/></svg></span>
      </div>
      <div class="stack">
        <div class="drop prop d-flex align-items-center"><span class="swatch wide"></span><select aria-label="Object color"><option>ByLayer</option></select><svg class="c8"><use href="#dn8"/></svg></div>
        <div class="drop prop d-flex align-items-center"><span class="rule"></span><select class="ps-0" aria-label="Lineweight"><option>ByLayer</option></select><svg class="c8"><use href="#dn8"/></svg></div>
        <div class="drop prop d-flex align-items-center"><span class="rule"></span><select class="ps-0" aria-label="Linetype"><option>ByLayer</option></select><svg class="c8"><use href="#dn8"/></svg></div>
      </div>
    </div>
    <div class="foot d-flex align-items-center justify-content-center pe-3">Properties<svg class="c8"><use href="#dn8"/></svg><svg class="launch" width="5" height="5"><use href="#lau"/></svg></div>
  </div>

  <div class="pane p-group">
    <div class="tools d-flex">
      <button class="btn big w42"><svg class="i32"><use href="#group"/></svg><span class="cap">Group</span></button>
      <div class="stack align-items-center">
        <button class="btn tool" aria-label="Ungroup"><svg class="i16"><use href="#g-un"/></svg></button>
        <button class="btn tool" aria-label="Group edit"><svg class="i16"><use href="#g-edit"/></svg></button>
        <button class="btn lit" aria-label="Group selection"><svg class="i16"><use href="#g-sel"/></svg></button>
      </div>
    </div>
    <div class="foot d-flex align-items-center justify-content-center">Groups<svg class="c8"><use href="#dn8"/></svg></div>
  </div>

  <div class="pane p-util">
    <div class="tools d-flex">
      <button class="btn big w72"><svg class="i32"><use href="#ruler"/></svg><span class="cap">Measure</span><svg class="c5"><use href="#dn5"/></svg></button>
      <div class="stack l2">
        <button class="btn tool" aria-label="Quick select"><svg class="i16"><use href="#qsel"/></svg></button>
        <button class="btn tool" aria-label="Select all"><svg class="i16"><use href="#selall"/></svg></button>
        <button class="btn tool" aria-label="Calculator"><svg class="i16"><use href="#calc"/></svg></button>
      </div>
    </div>
    <div class="foot d-flex align-items-center justify-content-center">Utilities<svg class="c8"><use href="#dn8"/></svg></div>
  </div>

  <div class="pane p-clip">
    <div class="tools d-flex">
      <button class="btn big w54"><svg class="i32"><use href="#paste"/></svg><span class="cap">Paste</span><svg class="c5"><use href="#dn5"/></svg></button>
      <div class="stack l3">
        <button class="btn tool" aria-label="Cut"><svg class="i16"><use href="#cut"/></svg><svg class="c5"><use href="#dn5"/></svg></button>
        <button class="btn tool" aria-label="Copy clip"><svg class="i16"><use href="#copyc"/></svg><svg class="c5"><use href="#dn5"/></svg></button>
      </div>
    </div>
    <div class="foot d-flex align-items-center justify-content-center">Clipboard</div>
  </div>

  <div class="pane">
    <div class="tools d-flex">
      <button class="btn big w62"><svg class="i32"><use href="#base"/></svg><span class="cap">Base</span><svg class="c5"><use href="#dn5"/></svg></button>
    </div>
    <div class="foot d-flex align-items-center l5">View<svg class="c8"><use href="#dn8"/></svg><svg width="5" height="5"><use href="#lau"/></svg></div>
  </div>
</section>

<nav class="docs d-flex align-items-center">
  <button class="btn" aria-label="File menu"><svg width="16" height="12"><use href="#menu"/></svg></button>
  <svg class="l12" width="8" height="16"><use href="#slash"/></svg>
  <a class="l6 text-reset text-decoration-none" href="#">Start</a>
  <div class="slant file d-flex align-items-center">Square Flange*<button class="btn l5" aria-label="Close tab"><svg width="8" height="8"><path d="M1 1l6 6M7 1L1 7" stroke="#b4b8be" stroke-width="2"/></svg></button></div>
  <button class="btn l7" aria-label="New tab"><svg width="14" height="14"><use href="#plus"/></svg></button>
  <svg class="l9" width="8" height="16"><use href="#slash"/></svg>
</nav>
<div class="edge"></div>

<main class="sheet flex-grow-1 d-flex align-items-center justify-content-center">
  <div class="vp">[−][Top][2D Wireframe]</div>
  <div class="vpc d-flex align-items-center">
    <svg width="14" height="12"><path d="M1.500 6.500h11v4h-11z" fill="#eee" stroke="#666"/></svg>
    <svg width="13" height="12"><path d="M3.500 .5h9v9h-2M1 2.500h9v9H1z" fill="#eee" stroke="#555"/><path d="M4.500 5.500h2v3h-2z" fill="none" stroke="#555"/></svg>
    <svg width="12" height="12"><path d="M.5 1.500h4L6 3.500l1.500-2h4L8.500 6l3 4.500h-4L6 8.500l-1.500 2h-4l3-4.500z" fill="#e4e4e4" stroke="#555"/></svg>
  </div>

  <svg width="430" height="430" viewBox="0 0 430 430" fill="none" stroke="#1c1c1c" stroke-width="1.200" role="img" aria-label="Square flange">
    <rect x=".5" y="1" width="428" height="428" rx="27"/>
    <circle cx="67.500" cy="68" r="27"/><circle cx="361.500" cy="68" r="27"/><circle cx="67.500" cy="362" r="27"/><circle cx="361.500" cy="362" r="27"/>
    <circle cx="214.500" cy="215" r="107"/><circle cx="214.500" cy="215" r="94"/>
  </svg>
  <svg class="cross crisp" width="97" height="97" fill="none" stroke="#000"><path d="M0 48.500h45M52 48.500h45M48.500 0v45M48.500 52v45M45.500 45.500h6v6h-6z"/></svg>

  <svg class="ucs" width="80" height="88" fill="none" stroke="#111"><path class="crisp" d="M5.500 74.500V24M5.500 74.500h50M1.500 70.500h9v9h-9z"/><g fill="#000" stroke="none" font-size="18"><text x="8" y="20">Y</text><text x="61" y="73">X</text></g></svg>

  <svg class="cube" width="134" height="152" viewBox="0 -10 134 152">
    <circle cx="67" cy="66" r="53.500" fill="none" stroke="#f8f8f8" stroke-width="14"/><circle cx="67" cy="66" r="53.500" fill="none" stroke="#fdfdfd" stroke-width="12"/>
    <g font-family="Liberation Sans,sans-serif" font-size="22" font-weight="700" text-anchor="middle" fill="#dedede" stroke="#b0b0b0"><text x="67" y="18">N</text><text x="67" y="130">S</text><text x="11" y="74">W</text><text x="123" y="74">E</text></g>
    <path class="crisp" d="M41.500 40.500h51v51h-51z" fill="#eee" stroke="#888"/><path d="M51 50h32v32H51z" fill="#e1e5e9"/>
    <text x="67" y="70" font-size="12" font-weight="700" text-anchor="middle" fill="#8e9296">TOP</text>
  </svg>
  <button class="btn wcs">WCS<svg width="9" height="5"><path d="M.5.5h8l-4 4z" fill="#fff" stroke="#bbb"/></svg></button>

  <svg class="navbarv" width="36" height="216" fill="#f5f5f5" stroke="#d6d6d6">
    <rect x="1" y="1" width="34" height="214" rx="5" fill="#f5f5f5" stroke="#c2c2c2" stroke-width="2"/>
    <circle cx="28" cy="7" r="3.500" fill="#dedede"/><path d="M26 5l4 4M30 5l-4 4" stroke="#fff"/>
    <path d="M18 22h8q3 0 3 3v7a11 11 0 1 1-11-10z"/><circle cx="18" cy="32" r="6"/><path d="M10 40l4-4M26 40l-4-4"/>
    <path d="M16 51h5l-2.500 3zM16 121h5l-2.500 3zM16 159h5l-2.500 3z" fill="#d6d6d6" stroke="none"/>
    <path d="M5 58.500h26M5 166.500h26"/>
    <path fill="#fff" d="M13 86q-2-5-6-8-1-2 1-2l4 2-2-9q0-2 2-1l3 7-1-10q2-2 3 0l1 9 2-10q2-1 3 0l-1 11 3-8q2-1 2 1l-2 10q0 5-3 8z"/>
    <path d="M6.500 95.500h10v2h-10z"/><circle cx="22" cy="106" r="5" fill="#fafdfb"/><path d="M26 110l4 4" stroke-width="3"/>
    <ellipse cx="18" cy="143" rx="11" ry="4"/><path fill="#fff" d="M16 151v-18h-3l5-5 4 5h-2v18z"/><path fill="#d6d6d6" d="M9 146l5-3v6z"/>
    <path d="M6.500 171.500h6v6h-6zM14.500 171.500h6v6h-6zM22.500 171.500h6v6h-6zM6.500 180.500h16v13h-16z"/><path fill="#d0d0d0" d="M11 183l7 4-7 4z"/>
    <circle cx="28" cy="208" r="3.500" fill="#dedede"/><path d="M26 207.500h4" stroke="#fff"/>
  </svg>

  <div class="cmd d-flex align-items-center">
    <div class="grip d-flex align-items-center">
      <svg width="5" height="17"><path d="M1 0v17M4 0v17" stroke="#eee" stroke-width="2" stroke-dasharray="2 1"/></svg>
      <button class="btn l7" aria-label="Close command line"><svg width="10" height="10"><path d="M1 1l8 8M9 1L1 9" stroke="#eee" stroke-width="2"/></svg></button>
      <button class="btn l12" aria-label="Customize"><svg width="15" height="15"><path d="M2 13l7-7" stroke="#eee" stroke-width="3" stroke-linecap="round"/><path d="M7 4q1-4 5-4l-2 3 2 2 3-1q0 5-6 5z" fill="#eee"/></svg></button>
    </div>
    <svg class="ms-1" width="16" height="12"><path d="M.5.5h15v11H.5z" fill="#f6f6f6" stroke="#888"/><path d="M1 1.500h14" stroke="#888" stroke-width="2"/><path d="M2 4l3 2-3 2M6 9.500h4" stroke="#888" fill="none"/></svg>
    <svg class="l3" width="7" height="4" fill="#888"><path d="M0 0h7L3.500 4z"/></svg>
    <input type="text" aria-label="Command" placeholder="Type a command">
    <svg class="me-1" width="7" height="4" fill="#888"><path d="M0 4h7L3.500 0z"/></svg>
  </div>
</main>
<div class="edge"></div>

<footer class="status d-flex">
  <button class="btn align-self-start" aria-label="Layout menu"><svg class="hamb" width="16" height="12"><use href="#menu"/></svg></button>
  <a class="slant d-flex align-items-center text-reset text-decoration-none" href="#">Model</a>
  <div class="d-flex align-items-center pb-1 flex-grow-1">
    <a class="l6 text-reset text-decoration-none" href="#">Layout1</a><svg class="l6" width="8" height="16"><use href="#slash"/></svg>
    <a class="l6 text-reset text-decoration-none" href="#">Layout2</a><svg class="l7" width="8" height="16"><use href="#slash"/></svg>
    <button class="btn l9" aria-label="New layout"><svg width="14" height="14"><use href="#plus"/></svg></button><svg class="l9" width="8" height="16"><use href="#slash"/></svg>
  </div>
  <div class="toggles d-flex align-items-center">
    <div class="grp d-flex"><button class="btn w48">MODEL</button></div>
    <div class="grp d-flex">
      <button class="btn" aria-label="Grid"><svg class="i16"><path class="kw crisp" d="M3.500 0v16M7.500 0v16M11.500 0v16M0 3.500h16M0 7.500h16M0 11.500h16"/></svg></button>
      <button class="btn" aria-label="Snap"><svg class="i16"><path class="kw crisp" stroke-width="2" stroke-dasharray="2 4" d="M1 3h14M1 8h14M1 13h14"/></svg></button>
      <button class="btn car" aria-label="Snap options"><svg class="c8"><use href="#dn8"/></svg></button>
    </div>
    <div class="grp d-flex">
      <button class="btn" aria-label="Ortho"><svg class="i16"><path class="kw crisp" d="M.5 1v14.500H16M.5 10.500h5V15"/></svg></button>
      <button class="btn" aria-label="Polar"><svg class="i16"><path class="kw" stroke-width="1.300" d="M11.500 4A6 6 0 1 0 13 9M7 8.500h9M7 8.500l6-7"/></svg></button>
      <button class="btn car" aria-label="Polar options"><svg class="c8"><use href="#dn8"/></svg></button>
      <button class="btn" aria-label="Isodraft"><svg class="i16"><path class="kr" d="M1 1l13 13"/><path class="kg crisp" d="M8.500 0v16"/><path class="kx" d="M7 6.500h3v3H7z"/></svg></button>
      <button class="btn car" aria-label="Isodraft options"><svg class="c8"><use href="#dn8"/></svg></button>
    </div>
    <div class="grp near d-flex">
      <button class="btn" aria-label="Object snap tracking"><svg class="i16"><path class="kw" d="M14 2L1 14.500h15"/><path class="fw" d="M6 7h4v4H6z"/></svg></button>
      <button class="btn on" aria-label="Object snap"><svg class="i16"><path class="kx crisp" d="M.5.500h4v4h-4zM6 2.500h9.500v13H2.500V6"/></svg></button>
      <button class="btn car" aria-label="Object snap options"><svg class="c8"><use href="#dn8"/></svg></button>
    </div>
    <div class="grp d-flex">
      <button class="btn on" aria-label="Annotation visibility"><svg class="i16" fill="#fff"><use href="#ann" x="-1"/><circle class="kx" cx="13" cy="3" r="2.200"/></svg></button>
      <button class="btn" aria-label="Auto scale"><svg class="i16" fill="#dcdcdc"><use href="#ann"/><path d="M12 0l-2 4h3l-2 4 5-5h-3l1-3z"/></svg></button>
      <button class="btn" aria-label="Annotation scale"><svg class="i16" fill="#dcdcdc"><use href="#ann"/></svg></button>
      <button class="btn g5 w34">1:1<svg class="c8"><use href="#dn8"/></svg></button>
    </div>
    <div class="grp d-flex">
      <button class="btn" aria-label="Workspace"><svg class="i16"><circle class="kw" cx="8" cy="8" r="4" stroke-width="3.500"/><circle class="kw" cx="8" cy="8" r="6.500" stroke-width="2.500" stroke-dasharray="2.600 2.500"/></svg></button>
      <button class="btn car" aria-label="Workspace options"><svg class="c8"><use href="#dn8"/></svg></button>
    </div>
    <div class="grp near"><button class="btn" aria-label="Annotation monitor"><svg class="i16" viewBox="0 0 14 14"><use href="#plus"/></svg></button></div>
    <div class="grp"><button class="btn" aria-label="Isolate objects"><svg class="i16"><path class="kw" d="M.5.500h6v6h-6zM3 15.500h7L6.500 9z"/><circle class="kw" cx="12.500" cy="7.500" r="3"/></svg></button></div>
    <div class="grp doc"><button class="btn" aria-label="File status"><svg class="i16"><path fill="#2f6bb0" d="M1 0h9l4 4v7H1z"/><path class="fy" d="M0 9h9v7H0z"/><path class="kx" d="M0 6.500h13M5.500 0v10"/><path class="kg" stroke-width="2" d="M8 12l3 3 5-5"/></svg></button></div>
    <div class="grp"><button class="btn" aria-label="Clean screen"><svg class="i16"><path class="kw crisp" d="M.5 1.500h15v13H.5z"/><path class="kw" d="M9 7l4-3M10 4h3v3M7 9l-4 3M3 9v3h3"/></svg></button></div>
    <div class="grp near"><button class="btn" aria-label="Customization"><svg width="16" height="14"><path class="fw crisp" d="M0 0h16v2H0zM0 6h16v2H0zM0 12h16v2H0z"/></svg></button></div>
  </div>
</footer>
<div class="foot2"></div>
<script src="https://cdn.jsdelivr.net/npm/bootstrap@5.3.0/dist/js/bootstrap.bundle.min.js"></script>
</body>
</html>
